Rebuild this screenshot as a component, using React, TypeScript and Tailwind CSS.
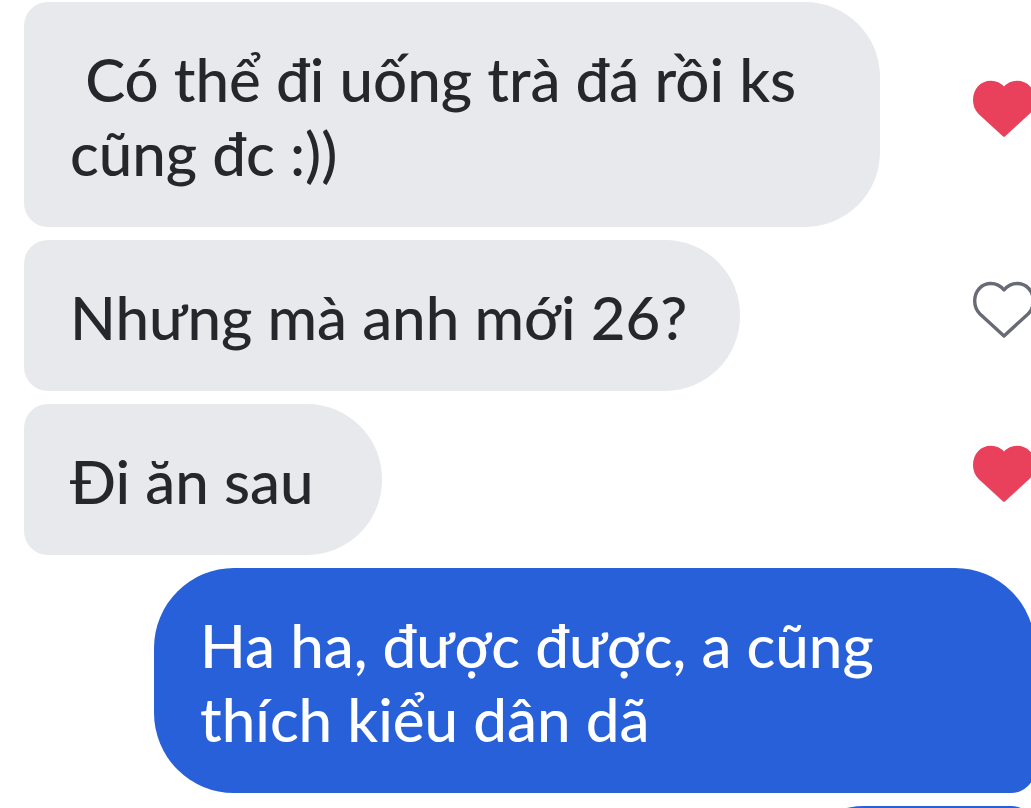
import clsx from "clsx";

type Message = {
  id: number;
  text: string;
  liked: boolean;
  size: string;
};

const received: Message[] = [
  {
    id: 1,
    text: "\u00a0Có thể đi uống trà đá rồi ks cũng đc :))",
    liked: true,
    size: "w-[856px]",
  },
  { id: 2, text: "Nhưng mà anh mới 26?", liked: false, size: "w-[716px]" },
  { id: 3, text: "Đi ăn sau", liked: true, size: "w-[358px]" },
];

function Heart({ liked }: { liked: boolean }) {
  return (
    <svg
      viewBox="0 0 62 58"
      className={clsx(
        "h-[58px] w-[62px]",
        liked ? "fill-[#e9405b] stroke-[#e9405b]" : "fill-white stroke-[#686b76]"
      )}
      strokeWidth="3.4"
      strokeLinejoin="round"
    >
      <path d="M31 55L7 33C3.300 29.300 1.700 25 1.700 20C1.700 10 8.500 2.500 18 2.500C23.500 2.500 27.500 4.800 31 9C34.500 4.800 38.500 2.500 44 2.500C53.500 2.500 60.300 10 60.300 20C60.300 25 58.700 29.300 55 33Z" />
    </svg>
  );
}

export default function App() {
  return (
    <main className="h-screen overflow-hidden bg-white pt-0.5 pl-6 font-['Lato',sans-serif] text-[60px] font-medium leading-[74px] text-[#25272c]">
      <div className="-mr-1 flex flex-col gap-[13px]">
        <ul className="flex flex-col gap-[13px]">
          {received.map(({ id, text, liked, size }) => (
            <li key={id} className="flex items-center justify-between">
              <p
                className={clsx(
                  "rounded-l-3xl rounded-r-[75px] bg-[#e8e9ed] pt-10 pb-[37px] pl-[46px] pr-5",
                  size
                )}
              >
                {text}
              </p>
              <button
                type="button"
                aria-label="Thích"
                aria-pressed={liked}
                className="mb-3 shrink-0"
              >
                <Heart liked={liked} />
              </button>
            </li>
          ))}
        </ul>

        <div className="flex flex-col items-end gap-[13px]">
          <p className="w-[881px] rounded-[80px] rounded-br-3xl bg-[#2860d9] px-[46px] pt-10 pb-[37px] text-white">
            Ha ha, được được, a cũng thích kiểu dân dã
          </p>
          <div className="h-40 w-[246px] rounded-[75px] rounded-tr-3xl bg-[#2860d9]" />
        </div>
      </div>
    </main>
  );
}
